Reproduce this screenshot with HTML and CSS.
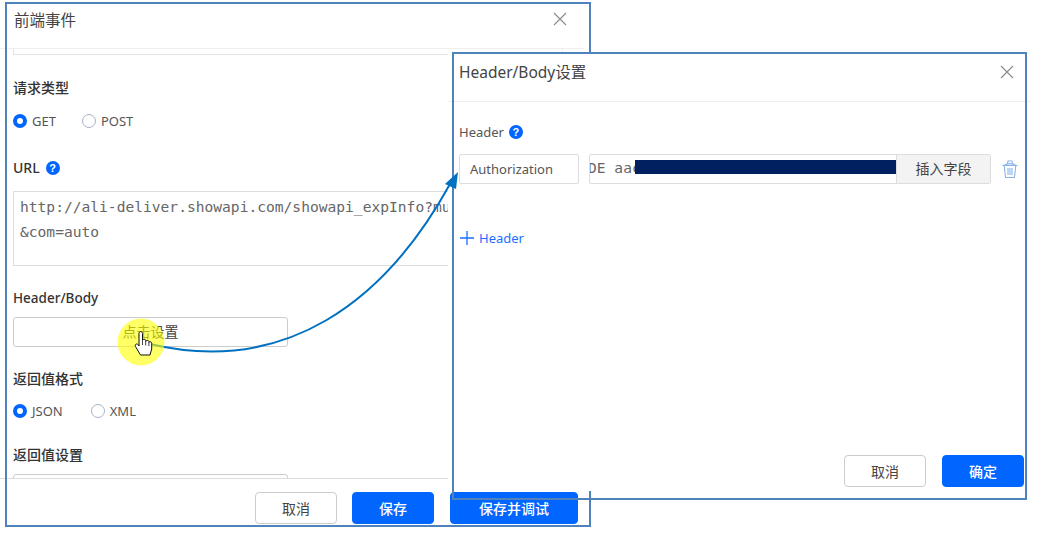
FILE: index.html
```html
<!DOCTYPE html>
<html lang="zh">
<head>
<meta charset="utf-8">
<title>前端事件</title>
<link rel="stylesheet" href="styles.css">
</head>
<body>
<section class="dialog dialog-left">
  <header class="left-head"><h2 class="title">前端事件</h2>
    <svg class="close" viewBox="0 0 14 14"><path d="M1 1l12 12M13 1L1 13"/></svg>
  </header>
  <div class="left-body">
    <div class="cut-top"></div>
    <div class="label first">请求类型</div>
    <div class="radios">
      <label class="radio"><i class="dot on"></i>GET</label>
      <label class="radio"><i class="dot"></i>POST</label>
    </div>
    <div class="label url">URL <b class="help">?</b></div>
    <div class="area">http://ali-deliver.showapi.com/showapi_expInfo?muid=1
&amp;com=auto</div>
    <div class="label after latin">Header/Body</div>
    <div class="setbtn">点击设置</div>
    <div class="label after">返回值格式</div>
    <div class="radios tight">
      <label class="radio"><i class="dot on"></i>JSON</label>
      <label class="radio"><i class="dot"></i>XML</label>
    </div>
    <div class="label last">返回值设置</div>
    <div class="setbtn"></div>
  </div>
  <footer class="left-foot">
    <span class="btn">取消</span>
    <span class="btn primary">保存</span>
    <span class="btn primary wide">保存并调试</span>
  </footer>
</section>
<div class="frame frame-left"></div>

<section class="dialog dialog-right">
  <header class="right-head"><h2 class="title">Header/Body设置</h2>
    <svg class="close" viewBox="0 0 14 14"><path d="M1 1l12 12M13 1L1 13"/></svg>
  </header>
  <div class="right-body">
    <div class="plain-label">Header <b class="help">?</b></div>
    <div class="kv">
      <div class="key">Authorization</div>
      <div class="value">
        <div class="val-text">DE&nbsp;aac<i class="mask"></i></div>
        <div class="addon">插入字段</div>
      </div>
      <svg class="trash" viewBox="0 0 16 18"><path d="M.5 5.500h15M2 5.500c3-2.500 9-2.500 12 0M5.500 3.500l.5-2.500h4l.5 2.500M2.200 5.500l1.300 12h9l1.300-12M6 8v7M8 8v7M10 8v7"/></svg>
    </div>
    <div class="add">
      <svg class="plus" viewBox="0 0 14 14"><path d="M7 0v14M0 7h14"/></svg>Header
    </div>
  </div>
  <footer class="right-foot">
    <span class="btn">取消</span>
    <span class="btn primary">确定</span>
  </footer>
</section>
<div class="frame frame-right"></div>

<svg class="overlay" viewBox="0 0 1048 550">
  <path class="curve" d="M150 344C285 376 385 302 450 184"/>
  <path class="head" d="M458 172L445 184L456 189Z"/>
  <circle class="spot" cx="141" cy="342" r="23.500"/>
  <path class="hand" d="M139 333.500c0-2.500 3.500-2.500 3.500 0v7c.3-1.800 3-1.800 3.200 0v1c.3-1.500 3-1.500 3.200 0v1c.3-1.200 2.800-1.200 2.800.8v5.700l-1.700 6h-9.500l-5-8.500c-1.200-2.300 1.700-3.400 2.800-1.700l.7 1.200z"/>
  <path class="hand-lines" d="M142.500 341v4M145.700 341.500v4M148.900 342.500v3.500"/>
</svg>
</body>
</html>
```
FILE: styles.css
```css
html, body { margin: 0; padding: 0; background: #fff; }
body {
  width: 1048px; height: 550px; position: relative; overflow: hidden;
  font-family: "Noto Sans", "Noto Sans CJK SC", sans-serif;
  font-size: 13px; color: #333;
}
.dialog { position: absolute; background: #fff; display: flex; flex-direction: column; box-sizing: border-box; }
.dialog-left { left: 0; top: 0; width: 584px; height: 550px; }
.dialog-right { left: 448px; top: 52px; width: 582px; height: 439px; z-index: 3; }
.frame { position: absolute; border: 2px solid #4f81bd; box-sizing: border-box; pointer-events: none; }
.frame-left { left: 5px; top: 2px; width: 586px; height: 525px; z-index: 2; }
.frame-right { left: 452px; top: 52px; width: 575px; height: 448px; z-index: 4; }
.title { margin: 0; font-size: 15.500px; font-weight: 400; color: #444; line-height: 20px; }
.close { width: 14px; height: 14px; fill: none; stroke: #888; stroke-width: 1.100; }
.left-head { height: 49px; box-sizing: border-box; padding: 10px 17px 0 14px; display: flex; justify-content: space-between; align-items: flex-start; flex: none; border-bottom: 1px solid #eee; }
.left-head .close { margin-top: 2px; }
.left-body { width: 563px; height: 430px; flex: none; padding: 0 0 0 13px; overflow: hidden; box-sizing: border-box; border-bottom: 1px solid #ddd; border-right: 1px solid #eee; }
.cut-top { height: 6px; border-bottom: 1px solid #e2e2e2; border-left: 1px solid #e2e2e2; box-sizing: border-box; }
.label { height: 20px; line-height: 20px; font-weight: 500; font-size: 14px; color: #333; display: flex; align-items: center; gap: 6px; }
.label.latin { font-size: 13.500px; }
.label.first { margin-top: 23px; }
.label.url { margin-top: 27px; }
.label.after { margin-top: 22px; }
.label.last { margin-top: 24px; }
.radios { display: flex; gap: 26px; height: 20px; margin-top: 13px; }
.radios.tight { margin-top: 12px; gap: 28px; }
.radio { display: flex; align-items: center; gap: 5px; font-size: 13px; color: #555; }
.dot { width: 14px; height: 14px; box-sizing: border-box; border-radius: 50%; border: 1px solid #aab2c8; background: #fff; }
.dot.on { border: 4px solid #0066ff; }
.help { display: inline-flex; align-items: center; justify-content: center; width: 14px; height: 14px; border-radius: 50%; background: #0066ff; color: #fff; font: 700 11px/14px "Liberation Sans", sans-serif; }
.area { margin-top: 13px; width: 540px; height: 75px; box-sizing: border-box; padding: 2px 6px; border: 1px solid #ddd; white-space: pre; overflow: hidden; font: 14.600px/25px "DejaVu Sans Mono", monospace; color: #666; }
.setbtn { margin-top: 9px; width: 275px; height: 30px; box-sizing: border-box; border: 1px solid #ccc; border-radius: 3px; text-align: center; line-height: 28px; font-size: 14px; color: #444; }
.left-foot { display: flex; justify-content: flex-end; gap: 15px; padding-top: 13px; width: 578px; flex: none; position: relative; z-index: 1; }
.btn { width: 82px; height: 32px; box-sizing: border-box; border: 1px solid #ccc; border-radius: 4px; display: flex; align-items: center; justify-content: center; font-size: 14px; color: #444; background: #fff; }
.btn.primary { background: #0066ff; border-color: #0066ff; color: #fff; font-weight: 500; }
.btn.wide { width: 128px; margin-left: 1px; }
.right-head { height: 50px; flex: none; box-sizing: border-box; padding: 10px 16px 0 11px; display: flex; justify-content: space-between; align-items: flex-start; border-bottom: 1px solid #eee; }
.right-head .close { margin-top: 3px; }
.right-body { flex: 1; padding: 20px 0 0 11px; }
.plain-label { display: flex; align-items: center; gap: 5px; height: 20px; font-size: 13px; color: #555; }
.kv { display: flex; align-items: center; margin-top: 12px; }
.key { width: 120px; height: 30px; box-sizing: border-box; border: 1px solid #ddd; border-radius: 2px; padding-left: 10px; line-height: 28px; font-size: 13px; color: #555; }
.value { width: 402px; height: 30px; margin-left: 10px; box-sizing: border-box; border: 1px solid #ddd; border-radius: 2px; display: flex; }
.val-text { width: 306px; overflow: hidden; white-space: nowrap; position: relative; text-indent: -2px; font: 14.600px/26px "DejaVu Sans Mono", monospace; color: #666; }
.mask { position: absolute; left: 45px; right: 0; top: 5px; height: 14px; background: #00205f; }
.addon { flex: 1; background: #f3f3f3; border-left: 1px solid #ddd; text-align: center; line-height: 28px; font-size: 14px; color: #444; }
.trash { width: 16px; height: 18px; margin-left: 11px; fill: none; stroke: #8ab4e8; stroke-width: 1.100; }
.add { display: flex; align-items: center; gap: 5px; margin-top: 44px; height: 20px; color: #1a6fff; font-size: 13px; }
.plus { width: 14px; height: 14px; fill: none; stroke: #1a6fff; stroke-width: 1.300; margin-left: 1px; }
.right-foot { display: flex; justify-content: flex-end; gap: 16px; padding: 0 6px 4px 0; flex: none; }
.overlay { position: absolute; left: 0; top: 0; width: 1048px; height: 550px; z-index: 5; pointer-events: none; }
.curve { fill: none; stroke: #0070c0; stroke-width: 2; }
.head { fill: #0070c0; }
.spot { fill: #ffff00; fill-opacity: .6; }
.hand { fill: #fff; stroke: #111; stroke-width: 1; stroke-linejoin: round; }
.hand-lines { fill: none; stroke: #111; stroke-width: .8; }
```
